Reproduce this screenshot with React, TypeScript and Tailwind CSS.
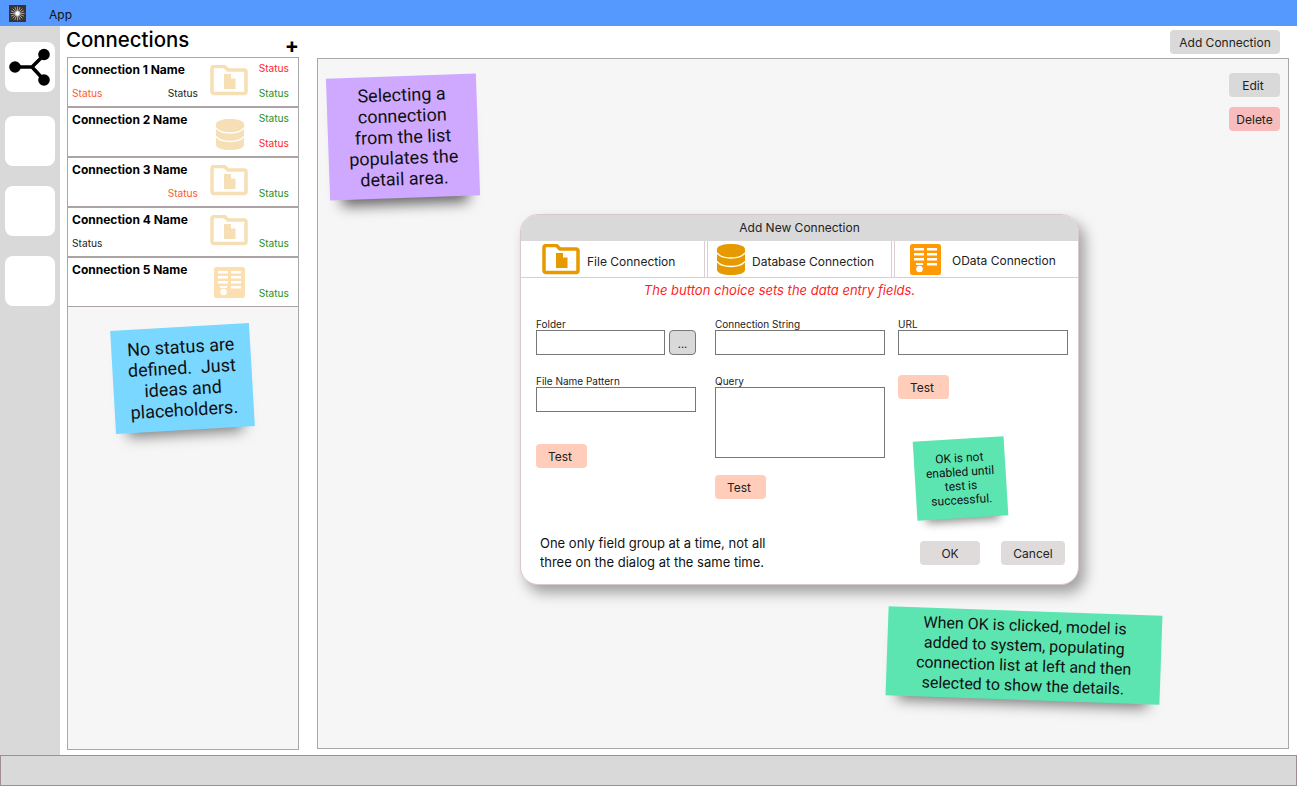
import type { ReactNode } from "react";

type Tone = "red" | "orange" | "green" | "black";

type Connection = {
  name: string;
  icon: "file" | "db" | "odata";
  left?: [string, Tone];
  mid?: [string, Tone];
  top?: [string, Tone];
  bottom?: [string, Tone];
};

const toneClass: Record<Tone, string> = {
  red: "text-[#ff1f2d]",
  orange: "text-[#ff5a1f]",
  green: "text-[#1f8f1f]",
  black: "text-[#222222]",
};

const connections: Connection[] = [
  { name: "Connection 1 Name", icon: "file", left: ["Status", "orange"], mid: ["Status", "black"], top: ["Status", "red"], bottom: ["Status", "green"] },
  { name: "Connection 2 Name", icon: "db", top: ["Status", "green"], bottom: ["Status", "red"] },
  { name: "Connection 3 Name", icon: "file", mid: ["Status", "orange"], bottom: ["Status", "green"] },
  { name: "Connection 4 Name", icon: "file", left: ["Status", "black"], bottom: ["Status", "green"] },
  { name: "Connection 5 Name", icon: "odata", bottom: ["Status", "green"] },
];

function FolderIcon({ color, className }: { color: string; className: string }) {
  return (
    <svg viewBox="0 0 38 31" className={className} fill="none">
      <path
        d="M2 8V3.500a2 2 0 0 1 2-2h10.500l3.500 3.500H34a2 2 0 0 1 2 2v19.500a2 2 0 0 1-2 2H4a2 2 0 0 1-2-2V8z"
        stroke={color}
        strokeWidth="3.500"
        strokeLinejoin="round"
      />
      <path d="M14 9h7l4.500 4.500V24H14z" fill={color} />
      <path d="M21 8.500l5 5h-5z" fill="#ffffff" />
    </svg>
  );
}

function DbIcon({ color, className }: { color: string; className: string }) {
  return (
    <svg viewBox="0 0 28 31" className={className} fill="none">
      <path d="M0 5c0-3 6.300-5 14-5s14 2 14 5v21c0 3-6.300 5-14 5S0 29 0 26z" fill={color} />
      <path d="M0 9c2.500 3.300 8 5 14 5s11.500-1.700 14-5" stroke="#ffffff" strokeWidth="1.300" />
      <path d="M0 17.500c2.500 3.300 8 5 14 5s11.500-1.700 14-5" stroke="#ffffff" strokeWidth="1.300" />
    </svg>
  );
}

function ODataIcon({ color, className }: { color: string; className: string }) {
  return (
    <svg viewBox="0 0 31 31" className={className}>
      <rect width="31" height="31" rx="2.500" fill={color} />
      <g fill="#ffffff">
        <rect x="4" y="4" width="10" height="2.500" />
        <rect x="17" y="4" width="10" height="2.500" />
        <rect x="4" y="9" width="10" height="2.500" />
        <rect x="17" y="9" width="10" height="2.500" />
        <rect x="4" y="14" width="10" height="2.500" />
        <rect x="17" y="14" width="10" height="2.500" />
        <rect x="6" y="19" width="7" height="2" />
        <rect x="17" y="19" width="10" height="2.500" />
        <circle cx="9.500" cy="25" r="3.300" />
      </g>
    </svg>
  );
}

function AppLogo() {
  const rays = Array.from({ length: 16 }, (_, i) => (i * Math.PI) / 8);
  return (
    <svg viewBox="0 0 17 17" className="h-[17px] w-[17px]">
      <rect width="17" height="17" fill="#3a3230" />
      {rays.map((a) => (
        <line
          key={a}
          x1="8.500"
          y1="8.500"
          x2={8.5 + Math.cos(a) * 7}
          y2={8.5 + Math.sin(a) * 7}
          stroke="#e8e0d8"
          strokeWidth="0.6"
        />
      ))}
      <circle cx="8.500" cy="8.500" r="2.200" fill="#ffffff" />
    </svg>
  );
}

function ShareIcon() {
  return (
    <svg viewBox="0 0 50 50" className="h-[50px] w-[50px]">
      <g stroke="#000000" strokeWidth="3.500" fill="none">
        <path d="M10 25h17l12-12M27 25l12 13" />
      </g>
      <circle cx="10" cy="25" r="5.800" />
      <circle cx="39" cy="12.500" r="5.800" />
      <circle cx="39" cy="38" r="5.800" />
    </svg>
  );
}

function StatusText({ value, align }: { value?: [string, Tone]; align?: string }) {
  if (!value) return <span />;
  return <span className={`text-[10.200px] leading-[13px] ${toneClass[value[1]]} ${align ?? ""}`}>{value[0]}</span>;
}

function ConnectionRow({ item }: { item: Connection }) {
  const tint = "#f6dfb4";
  return (
    <div className="grid h-[50px] grid-cols-[64px_62px_60px_36px] border-b-2 border-[#aca4a4] bg-white pl-[4px] last:h-[49px] last:border-b">
      <div className="col-span-2 flex flex-col justify-between pt-[4px] pb-[6px]">
        <div className="text-[12px] leading-[15px] font-bold text-black">{item.name}</div>
        <div className="flex justify-between">
          <StatusText value={item.left} />
          <StatusText value={item.mid} />
        </div>
      </div>
      <div className="flex items-center justify-center">
        {item.icon === "file" && <FolderIcon color={tint} className="mb-[4px] ml-[2px] h-[31px] w-[38px]" />}
        {item.icon === "db" && <DbIcon color={tint} className="mt-[5px] ml-[4px] h-[31px] w-[28px]" />}
        {item.icon === "odata" && <ODataIcon color="#fbdfb0" className="mt-[1px] ml-[2px] h-[31px] w-[31px]" />}
      </div>
      <div className="flex flex-col items-end justify-between pt-[4px] pr-[5px] pb-[6px]">
        <StatusText value={item.top} />
        <StatusText value={item.bottom} />
      </div>
    </div>
  );
}

function GreyButton({ children, className }: { children: ReactNode; className: string }) {
  return (
    <button className={`flex h-[24px] items-center justify-center rounded-[4px] pt-[2px] text-[12px] text-[#222222] ${className}`}>
      {children}
    </button>
  );
}

function TestButton({ className }: { className: string }) {
  return <GreyButton className={`w-[51px] bg-[#ffcdb9] pr-[3px] ${className}`}>Test</GreyButton>;
}

function Field({ label, children, className }: { label: string; children: ReactNode; className?: string }) {
  return (
    <div className={className}>
      <div className="h-[12px] text-[10px] leading-[13px] text-[#222222]">{label}</div>
      {children}
    </div>
  );
}

function Box({ className }: { className: string }) {
  return <div className={`border border-[#777777] bg-white ${className}`} />;
}

function Tab({ label, icon, className, labelClass }: { label: string; icon: ReactNode; className: string; labelClass: string }) {
  return (
    <div className={`flex items-center border-[#d9cfd2] ${className}`}>
      {icon}
      <span className={`text-[12px] text-[#222222] ${labelClass}`}>{label}</span>
    </div>
  );
}

function Dialog() {
  return (
    <div className="absolute top-[214px] left-[520px] flex h-[371px] w-[559px] flex-col overflow-hidden rounded-[18px] border border-[#d8c9cd] bg-white shadow-[6px_8px_14px_rgba(0,0,0,0.35)]">
      <div className="flex h-[26px] shrink-0 items-center justify-center bg-[#d9d9d9] text-[12px] text-[#222222]">
        Add New Connection
      </div>
      <div className="flex h-[37px] shrink-0 gap-[2px] border-b border-[#d9cfd2]">
        <Tab
          label="File Connection"
          labelClass="pt-[6px]"
          className="w-[184px] border-r pl-[21px]"
          icon={<FolderIcon color="#e69a00" className="mr-[7px] h-[31px] w-[38px]" />}
        />
        <Tab
          label="Database Connection"
          labelClass="pt-[6px]"
          className="w-[185px] border-x pl-[9px]"
          icon={<DbIcon color="#e69a00" className="mr-[7px] h-[31px] w-[28px]" />}
        />
        <Tab
          label="OData Connection"
          labelClass="pt-[4px]"
          className="flex-1 border-l pl-[15px]"
          icon={<ODataIcon color="#ff9a05" className="mr-[11px] h-[31px] w-[31px]" />}
        />
      </div>
      <div className="pt-[4px] pr-[40px] text-center text-[13px] leading-[16px] text-[#ff1f1f] italic">
        The button choice sets the data entry fields.
      </div>

      <div className="flex gap-[19px] pt-[20px] pl-[15px]">
        <div className="w-[160px]">
          <Field label="Folder">
            <div className="flex gap-[4px]">
              <Box className="h-[25px] w-[129px]" />
              <button className="flex h-[25px] w-[27px] items-center justify-center rounded-[4px] border border-[#777777] bg-[#d9d9d9] pt-[3px] text-[11px] text-[#222222]">
                ...
              </button>
            </div>
          </Field>
          <Field label="File Name Pattern" className="mt-[20px]">
            <Box className="h-[25px] w-[160px]" />
          </Field>
          <TestButton className="mt-[32px]" />
        </div>
        <div className="w-[170px]">
          <Field label="Connection String">
            <Box className="h-[25px] w-[170px]" />
          </Field>
          <Field label="Query" className="mt-[20px]">
            <Box className="h-[71px] w-[170px]" />
          </Field>
          <TestButton className="mt-[17px]" />
        </div>
        <div className="ml-[-6px] w-[170px]">
          <Field label="URL">
            <Box className="h-[25px] w-[170px]" />
          </Field>
          <TestButton className="mt-[20px]" />
        </div>
      </div>

      <div className="mt-auto flex items-end justify-between pr-[13px] pb-[12px] pl-[19px]">
        <div className="text-[13px] leading-[19px] text-[#111111]">
          One only field group at a time, not all
          <br />
          three on the dialog at the same time.
        </div>
        <div className="mb-[7px] flex gap-[21px]">
          <GreyButton className="w-[60px] bg-[#e0dbdb]">OK</GreyButton>
          <GreyButton className="w-[64px] bg-[#e0dbdb]">Cancel</GreyButton>
        </div>
      </div>
    </div>
  );
}

function Sticky({ lines, className }: { lines: string[]; className: string }) {
  return (
    <div className={`absolute flex flex-col items-center justify-center text-center font-['Roboto',sans-serif] text-[#111111] ${className}`}>
      {lines.map((line) => (
        <div key={line} className="whitespace-pre">
          {line}
        </div>
      ))}
    </div>
  );
}

export default function App() {
  return (
    <div className="relative flex h-[786px] w-[1297px] flex-col overflow-hidden bg-white font-['Inter',sans-serif]">
      <div className="flex h-[26px] shrink-0 items-center bg-[#5599ff] pl-[9px]">
        <AppLogo />
        <span className="ml-[23px] pt-[3px] text-[12px] text-[#111111]">App</span>
      </div>

      <div className="flex min-h-0 flex-1">
        <div className="flex w-[60px] shrink-0 flex-col gap-[20px] bg-[#d9d9d9] pt-[16px] pl-[5px]">
          <div className="flex h-[50px] w-[50px] items-center justify-center rounded-[8px] bg-white">
            <ShareIcon />
          </div>
          <div className="mt-[4px] h-[50px] w-[50px] rounded-[8px] bg-white" />
          <div className="h-[50px] w-[50px] rounded-[8px] bg-white" />
          <div className="h-[50px] w-[50px] rounded-[8px] bg-white" />
        </div>

        <div className="flex w-[257px] shrink-0 flex-col pb-[5px] pl-[6px]">
          <div className="flex h-[31px] shrink-0 items-start justify-between pt-[1px] pr-[18px]">
            <h1 className="text-[20.400px] leading-[26px] font-medium text-black">Connections</h1>
            <span className="mt-[6px] text-[21px] leading-[26px] font-bold text-black">+</span>
          </div>
          <div className="ml-[1px] flex w-[232px] flex-1 flex-col border border-[#a8a8a8] bg-[#f6f6f6]">
            {connections.map((item) => (
              <ConnectionRow key={item.name} item={item} />
            ))}
          </div>
        </div>

        <div className="flex min-w-0 flex-1 flex-col pr-[8px] pb-[6px]">
          <div className="flex h-[32px] shrink-0 items-start justify-end pt-[4px] pr-[9px]">
            <GreyButton className="w-[110px] bg-[#d9d9d9]">Add Connection</GreyButton>
          </div>
          <div className="flex flex-1 flex-col items-end gap-[10px] border border-[#a8a8a8] bg-[#f6f6f6] pt-[14px] pr-[8px]">
            <GreyButton className="w-[51px] bg-[#d9d9d9] pr-[3px]">Edit</GreyButton>
            <GreyButton className="w-[51px] bg-[#f8bcbc]">Delete</GreyButton>
          </div>
        </div>
      </div>

      <div className="h-[31px] shrink-0 border border-[#a08e90] bg-[#d9d9d9]" />

      <Dialog />

      <Sticky
        lines={["Selecting a", "connection", "from the list", "populates the", "detail area."]}
        className="top-[76px] left-[328px] h-[122px] w-[150px] -rotate-2 bg-[#cfa8ff] pb-[2px] text-[18px] leading-[21px] shadow-[0_18px_14px_-12px_rgba(0,0,0,0.6)]"
      />
      <Sticky
        lines={["No status are", "defined.  Just", "ideas and", "placeholders."]}
        className="top-[327px] left-[113px] h-[103px] w-[139px] rotate-[-3.300deg] bg-[#7ad7ff] pb-[2px] text-[18px] leading-[21px] shadow-[0_16px_14px_-12px_rgba(0,0,0,0.5)]"
      />
      <Sticky
        lines={["OK is not", "enabled until", "test is", "successful."]}
        className="top-[439px] left-[915px] h-[79px] w-[91px] rotate-[-3.500deg] bg-[#5ce5b1] text-[12px] leading-[14px] shadow-[0_12px_10px_-9px_rgba(0,0,0,0.45)]"
      />
      <Sticky
        lines={["When OK is clicked, model is", "added to system, populating", "connection list at left and then", "selected to show the details."]}
        className="top-[611px] left-[887px] h-[89px] w-[274px] rotate-2 bg-[#5ce5b1] text-[16px] leading-[20px] shadow-[0_16px_14px_-12px_rgba(0,0,0,0.5)]"
      />
    </div>
  );
}
